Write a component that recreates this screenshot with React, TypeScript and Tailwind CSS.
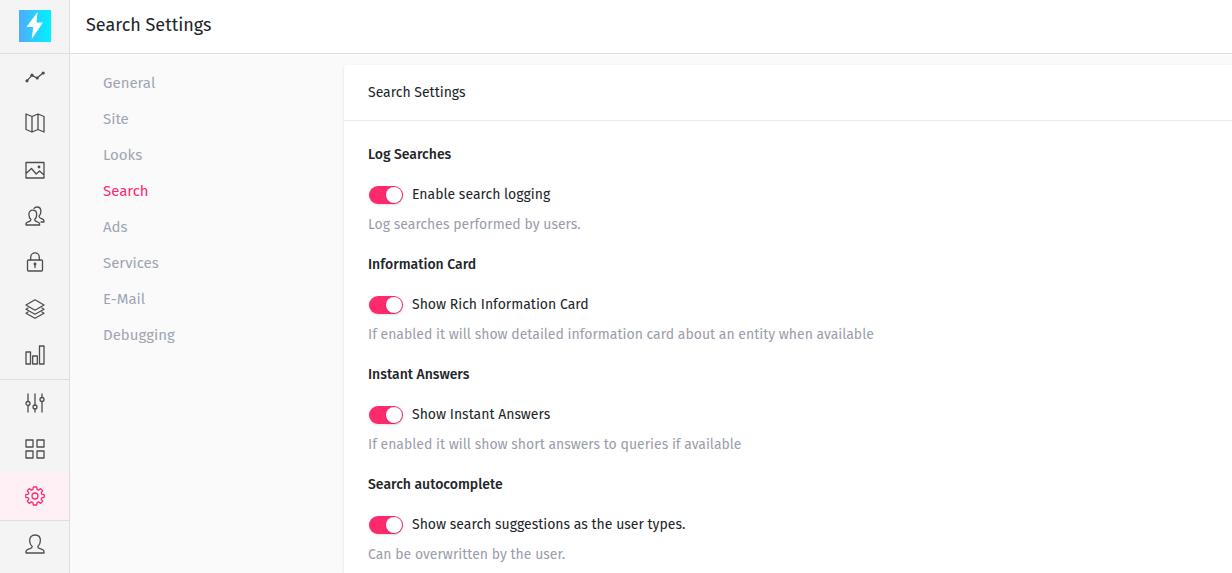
import type { ReactNode } from "react";

function Icon({ children, label }: { children: ReactNode; label: string }) {
  return (
    <svg
      role="img"
      aria-label={label}
      viewBox="0 0 20 20"
      className="size-5"
      fill="none"
      stroke="currentColor"
      strokeWidth="1.3"
      strokeLinejoin="round"
      strokeLinecap="round"
    >
      {children}
    </svg>
  );
}

const mainItems: { label: string; icon: ReactNode }[] = [
  {
    label: "Activity",
    icon: (
      <>
        <path d="M2 13.6 7 8.4l5 2.6 6-5" />
        <g fill="currentColor" stroke="none">
          <circle cx="2" cy="13.8" r="1.6" />
          <circle cx="7" cy="8.2" r="1.6" />
          <circle cx="12.2" cy="11" r="1.6" />
          <circle cx="18.2" cy="6" r="1.6" />
        </g>
      </>
    ),
  },
  {
    label: "Map",
    icon: <path d="M1 1l6 2.5L13 1l6 2.5V19l-6-2.5L7 19l-6-2.5zM7 3.5V19M13 1v15.5" />,
  },
  {
    label: "Images",
    icon: (
      <>
        <path d="M1 2.5h18v15.500H1zM1 13.500l5.500-5 4.700 5.500 3.300-3L19 15" />
        <circle cx="14" cy="7" r="1.400" fill="currentColor" stroke="none" />
      </>
    ),
  },
  {
    label: "Users",
    icon: (
      <>
        <path d="M1 19v-1.200c0-1.100 1.400-1.600 3-2.100 1.500-.5 1.900-1.100 1.900-2.100-1.300-1.200-2-2.900-2-5 0-2.700 1.500-4.400 3.900-4.400s3.900 1.700 3.900 4.400c0 2.100-.7 3.800-2 5 0 1 .4 1.600 1.900 2.100 1.600.5 3 1 3 2.100V19z" />
        <path d="M9 2.400C9.700 1.400 10.800 1 12.100 1c2.400 0 3.800 1.600 3.800 4.300 0 2-.6 3.700-1.900 4.900 0 1.100.5 1.600 2 2.200 1.700.6 3 1.100 3 2.300V16h-3" />
      </>
    ),
  },
  {
    label: "Security",
    icon: (
      <>
        <rect x="2.500" y="8" width="15" height="11" rx="1" />
        <path d="M5.700 8V5.200a4.300 4.300 0 0 1 8.600 0V8M10 12.500v3" />
        <circle cx="10" cy="12" r=".8" fill="currentColor" />
      </>
    ),
  },
  {
    label: "Layers",
    icon: (
      <path d="M10 .8l9 5.200-9 5.200L1 6zM3 9l-2 1.200 9 5.100 9-5.100L17 9M3 13l-2 1.200 9 5.100 9-5.100-2-1.200" />
    ),
  },
  {
    label: "Statistics",
    icon: <path d="M1 7h4.500v12H1zM7.700 11h4.600v8H7.700zM14.500 1H19v18h-4.500z" />,
  },
];

const toolItems: { label: string; icon: ReactNode; active?: boolean }[] = [
  {
    label: "Controls",
    icon: (
      <>
        <path d="M3 1v7.500M3 12.500V19M10 1v11.500M10 16v3M17 1v3.500M17 8.500V19" />
        <circle cx="3" cy="10.500" r="2" />
        <circle cx="10" cy="14" r="2" />
        <circle cx="17" cy="6.500" r="2" />
      </>
    ),
  },
  {
    label: "Modules",
    icon: <path d="M1 1h7v7H1zM12 1h7v7h-7zM1 12h7v7H1zM12 12h7v7h-7z" />,
  },
  {
    label: "Settings",
    active: true,
    icon: (
      <>
        <path d="M8.400 1h3.200l.5 2.500 1.400.6 2.200-1.500 2 2-1.500 2.200.6 1.400 2.400.5v2.600l-2.400.5-.6 1.400 1.500 2.200-2 2-2.200-1.500-1.400.6-.5 2.500H8.400l-.5-2.500-1.400-.6-2.200 1.500-2-2 1.500-2.200-.6-1.400L.8 11.300V8.700l2.400-.5.6-1.400-1.500-2.200 2-2 2.200 1.500 1.400-.6z" />
        <circle cx="10" cy="10" r="3" />
      </>
    ),
  },
];

const sections = ["General", "Site", "Looks", "Search", "Ads", "Services", "E-Mail", "Debugging"];

const settings = [
  { id: "log", title: "Log Searches", label: "Enable search logging", help: "Log searches performed by users." },
  {
    id: "card",
    title: "Information Card",
    label: "Show Rich Information Card",
    help: "If enabled it will show detailed information card about an entity when available",
  },
  {
    id: "answers",
    title: "Instant Answers",
    label: "Show Instant Answers",
    help: "If enabled it will show short answers to queries if available",
  },
  {
    id: "autocomplete",
    title: "Search autocomplete",
    label: "Show search suggestions as the user types.",
    help: "Can be overwritten by the user.",
  },
];

function NavLink({ label, icon, active }: { label: string; icon: ReactNode; active?: boolean }) {
  return (
    <a
      href="#"
      className={
        active
          ? "flex items-center justify-center bg-[#fff0f5] pb-px text-[#ff296d]"
          : "flex items-center justify-center pb-px text-[#4d4d4d]"
      }
    >
      <Icon label={label}>{icon}</Icon>
    </a>
  );
}

export default function App() {
  return (
    <div className="flex h-screen overflow-hidden bg-[#fafafa] font-['Fira_Sans','Noto_Sans',sans-serif] text-sm text-[#212529]">
      <aside className="flex w-[70px] shrink-0 flex-col border-r border-[#dedede] bg-[#f4f4f4]">
        <a href="#" className="flex h-[54px] shrink-0 items-center justify-center border-b border-[#dedede] pb-0.5">
          <svg role="img" aria-label="Home" viewBox="0 0 32 32" className="size-8">
            <defs>
              <linearGradient id="logo">
                <stop stopColor="#4facfe" />
                <stop offset="1" stopColor="#00f2fe" />
              </linearGradient>
            </defs>
            <path d="M0 0h32v32H0z" fill="url(#logo)" />
            <path d="M18.500 2 7.500 17h6.700L12.700 29 24 12.500h-6.500z" fill="#fff" />
          </svg>
        </a>
        <nav aria-label="Main" className="grid h-[326px] shrink-0 grid-rows-7 border-b border-[#dedede]">
          {mainItems.map((item) => (
            <NavLink key={item.label} {...item} />
          ))}
        </nav>
        <nav aria-label="Tools" className="grid h-[141px] shrink-0 grid-rows-3 border-b border-[#dedede]">
          {toolItems.map((item) => (
            <NavLink key={item.label} {...item} />
          ))}
        </nav>
        <div className="grid h-[47px] shrink-0">
          <NavLink
            label="Account"
            icon={
              <path d="M1 19v-1.500c0-1.300 1.500-2 4-2.800 1.700-.5 2.200-1.200 2.200-2.300C5.500 10.900 4.600 9 4.600 6.500 4.600 3.100 6.800 1 10 1s5.400 2.100 5.400 5.500c0 2.500-.9 4.400-2.600 5.900 0 1.100.5 1.800 2.200 2.300 2.500.8 4 1.500 4 2.800V19z" />
            }
          />
        </div>
      </aside>

      <div className="flex min-w-0 flex-1 flex-col">
        <header className="flex h-[54px] shrink-0 items-center border-b border-[#dedede] bg-white px-4 pb-1">
          <h1 className="text-lg">Search Settings</h1>
        </header>
        <div className="flex min-h-0 flex-1">
          <nav aria-label="Settings sections" className="flex w-[274px] shrink-0 flex-col pt-3 pl-[33px]">
            {sections.map((name) => (
              <a
                key={name}
                href="#"
                className={
                  name === "Search"
                    ? "flex h-9 items-center text-[15px] text-[#ff296d]"
                    : "flex h-9 items-center text-[15px] text-[#a1a5b3]"
                }
              >
                {name}
              </a>
            ))}
          </nav>
          <main className="mt-[11px] min-w-0 flex-1 rounded-tl bg-white shadow-sm">
            <h2 className="flex h-14 items-center border-b border-[#ebebeb] px-6">Search Settings</h2>
            <div className="px-6 pt-6">
              {settings.map((s) => (
                <section key={s.id} className="h-[110px]">
                  <h3 className="leading-5 font-medium">{s.title}</h3>
                  <label className="mt-5 flex items-center gap-2 leading-5">
                    <input
                      type="checkbox"
                      defaultChecked
                      className="mx-px flex h-[18px] w-[34px] appearance-none items-center rounded-full bg-gray-300 shadow-sm before:size-4 before:rounded-full before:bg-white before:shadow-sm checked:justify-end checked:bg-[#ff296d] checked:pr-px"
                    />
                    {s.label}
                  </label>
                  <p className="mt-2.5 leading-5 text-[#9a9dab]">{s.help}</p>
                </section>
              ))}
            </div>
          </main>
        </div>
      </div>
    </div>
  );
}
